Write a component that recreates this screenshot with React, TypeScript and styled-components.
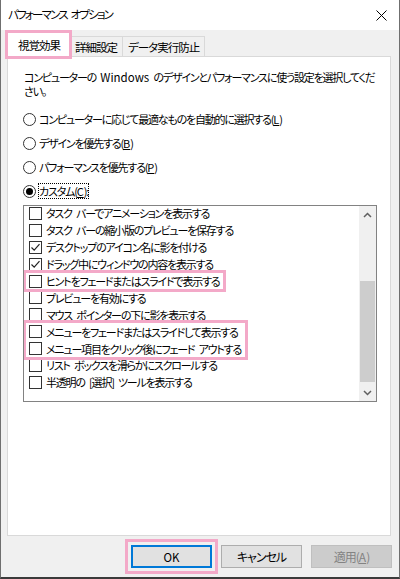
import React from 'react';
import styled, { createGlobalStyle } from 'styled-components';

const GlobalStyle = createGlobalStyle`
  html, body {
    margin: 0;
    padding: 0;
    background: #2b2b2b;
  }
  body {
    font-family: "Noto Sans CJK JP", "Noto Sans", sans-serif;
    font-size: 11px;
    color: #000;
    font-feature-settings: "palt";
    letter-spacing: -1.2px;
    word-spacing: 3px;
  }
`;

const PINK = '#f3a9c8';

const Window = styled.div`
  width: 400px;
  height: 579px;
  box-sizing: border-box;
  border-left: 1px solid #6f6f6f;
  border-right: 1px solid #6f6f6f;
  border-bottom: 2px solid #3a3a3a;
  background: #f0f0f0;
  display: flex;
  flex-direction: column;
  overflow: hidden;
`;

const TitleBar = styled.div`
  height: 30px;
  flex: none;
  background: #fff;
  display: flex;
  align-items: center;
  justify-content: space-between;
  padding: 0 12px 0 7px;
  box-sizing: border-box;
`;

const Title = styled.span`
  line-height: 1;
  font-size: 11.5px;
  letter-spacing: -1.8px;
`;

const Latin = styled.span`
  letter-spacing: 0;
  font-size: 11.5px;
`;

const Body = styled.div`
  flex: 1;
  display: flex;
  flex-direction: column;
  padding: 0 8px 0 6px;
  min-height: 0;
`;

const TabStrip = styled.div`
  height: 27px;
  flex: none;
  display: flex;
  align-items: flex-end;
  margin-bottom: -1px;
  position: relative;
  z-index: 2;
`;

const Tab = styled.div<{ active?: boolean; marked?: boolean }>`
  box-sizing: border-box;
  display: flex;
  align-items: center;
  justify-content: center;
  height: ${p => (p.active ? '25px' : '21px')};
  padding: ${p => (p.active ? '0 9px 0 10px' : '0 5px')};
  margin-left: ${p => (p.active ? '0' : '-1px')};
  background: ${p => (p.active ? '#fff' : '#f0f0f0')};
  border: 1px solid #d9d9d9;
  border-bottom: ${p => (p.active ? '1px solid #fff' : '1px solid #d9d9d9')};
  position: relative;
  z-index: ${p => (p.active ? 2 : 1)};
  white-space: nowrap;
  font-size: 11.5px;
  letter-spacing: -1px;
  ${p => (p.marked ? `outline: 3px solid ${PINK}; outline-offset: -1px;` : '')}
`;

const Panel = styled.div`
  flex: 1;
  background: #fff;
  border: 1px solid #d9d9d9;
  padding: 13px 13px 0 15px;
  display: flex;
  flex-direction: column;
  position: relative;
  z-index: 1;
`;

const Description = styled.p`
  margin: 0;
  line-height: 14px;
  padding-left: 1px;
`;

const Line = styled.span`
  display: block;
  white-space: nowrap;
`;

const RadioGroup = styled.div`
  margin-top: 13px;
  display: flex;
  flex-direction: column;
  gap: 8px;
`;

const RadioRow = styled.div`
  height: 16px;
  display: flex;
  align-items: center;
  gap: 3px;
`;

const RadioCircle = styled.span<{ checked?: boolean }>`
  width: 13px;
  height: 13px;
  box-sizing: border-box;
  border: 1px solid #333;
  border-radius: 50%;
  display: flex;
  align-items: center;
  justify-content: center;
  &::after {
    content: '';
    width: 7px;
    height: 7px;
    border-radius: 50%;
    background: #000;
    display: ${p => (p.checked ? 'block' : 'none')};
  }
`;

const RadioLabel = styled.span<{ focused?: boolean }>`
  line-height: 14px;
  white-space: nowrap;
  ${p => (p.focused ? 'outline: 1px dotted #000; outline-offset: 0;' : '')}
`;

const Key = styled.span`
  text-decoration: underline;
  letter-spacing: 0;
`;

const ListBox = styled.div`
  margin-top: 6px;
  height: 197px;
  box-sizing: border-box;
  border: 1px solid #828282;
  display: flex;
  overflow: hidden;
`;

const ListItems = styled.div`
  flex: 1;
  display: flex;
  flex-direction: column;
  align-items: flex-start;
  padding: 0 0 0 5px;
  margin-top: -1px;
  overflow: hidden;
`;

const Marked = styled.div`
  display: flex;
  flex-direction: column;
  flex: none;
  margin-left: -3px;
  padding: 0 4px 0 3px;
  outline: 3px solid ${PINK};
  outline-offset: 0;
  background: #fff;
  position: relative;
  z-index: 1;
`;

const CheckRow = styled.div`
  height: 16.9px;
  flex: none;
  display: flex;
  align-items: center;
  gap: 4px;
  white-space: nowrap;
  line-height: 14px;
`;

const Box = styled.span`
  width: 13px;
  height: 13px;
  box-sizing: border-box;
  border: 1px solid #333;
  background: #fff;
  flex: none;
  display: flex;
  align-items: center;
  justify-content: center;
`;

const ScrollBar = styled.div`
  width: 17px;
  flex: none;
  background: #f0f0f0;
  display: flex;
  flex-direction: column;
  align-items: center;
`;

const ArrowBtn = styled.div`
  width: 17px;
  height: 17px;
  flex: none;
  display: flex;
  align-items: center;
  justify-content: center;
`;

const Track = styled.div`
  flex: 1;
  width: 100%;
  display: flex;
  flex-direction: column;
  align-items: center;
  padding-top: 58px;
  box-sizing: border-box;
`;

const Thumb = styled.div`
  width: 15px;
  height: 101px;
  background: #cdcdcd;
`;

const Footer = styled.div`
  height: 41px;
  flex: none;
  display: flex;
  justify-content: flex-end;
  align-items: flex-start;
  padding-top: 9px;
  box-sizing: border-box;
  gap: 9px;
  margin-right: -1px;
`;

const Button = styled.button<{ variant?: 'default' | 'normal' | 'disabled'; marked?: boolean }>`
  width: 81px;
  height: 23px;
  box-sizing: border-box;
  font-family: inherit;
  font-size: 12px;
  font-feature-settings: "palt";
  letter-spacing: -1px;
  padding: 0;
  margin: 0;
  background: ${p => (p.variant === 'disabled' ? '#cccccc' : '#e1e1e1')};
  color: ${p => (p.variant === 'disabled' ? '#838383' : '#000')};
  border: ${p =>
    p.variant === 'default'
      ? '2px solid #0078d7'
      : p.variant === 'disabled'
        ? '1px solid #bfbfbf'
        : '1px solid #adadad'};
  ${p => (p.marked ? `outline: 3px solid ${PINK}; outline-offset: 3px;` : '')}
`;

const Check = () => (
  <svg width="11" height="11" viewBox="0 0 11 11">
    <path d="M1.5 5.5 L4.2 8.2 L9.5 2.2" fill="none" stroke="#222" strokeWidth="1.2" />
  </svg>
);

const Chevron = ({ down }: { down?: boolean }) => (
  <svg width="9" height="6" viewBox="0 0 9 6">
    <path
      d={down ? 'M1 1 L4.5 4.5 L8 1' : 'M1 5 L4.5 1.5 L8 5'}
      fill="none"
      stroke="#606060"
      strokeWidth="1.5"
    />
  </svg>
);

type Item = { label: string; checked?: boolean };

const CheckItem = ({ label, checked }: Item) => (
  <CheckRow>
    <Box>{checked && <Check />}</Box>
    <span>{label}</span>
  </CheckRow>
);

const before: Item[] = [
  { label: 'タスク バーでアニメーションを表示する' },
  { label: 'タスク バーの縮小版のプレビューを保存する' },
  { label: 'デスクトップのアイコン名に影を付ける', checked: true },
  { label: 'ドラッグ中にウィンドウの内容を表示する', checked: true },
];

const middle: Item[] = [
  { label: 'プレビューを有効にする' },
  { label: 'マウス ポインターの下に影を表示する' },
];

const menus: Item[] = [
  { label: 'メニューをフェードまたはスライドして表示する' },
  { label: 'メニュー項目をクリック後にフェード アウトする' },
];

const after: Item[] = [
  { label: 'リスト ボックスを滑らかにスクロールする' },
  { label: '半透明の [選択] ツールを表示する' },
];

export default function App() {
  return (
    <>
      <GlobalStyle />
      <Window>
        <TitleBar>
          <Title>パフォーマンス オプション</Title>
          <svg width="11" height="11" viewBox="0 0 11 11">
            <path d="M0.5 0.5 L10.5 10.5 M10.5 0.5 L0.5 10.5" stroke="#000" strokeWidth="1" />
          </svg>
        </TitleBar>
        <Body>
          <TabStrip>
            <Tab active marked>視覚効果</Tab>
            <Tab>詳細設定</Tab>
            <Tab>データ実行防止</Tab>
          </TabStrip>
          <Panel>
            <Description>
              <Line>
                コンピューターの <Latin>Windows</Latin> のデザインとパフォーマンスに使う設定を選択してくだ
              </Line>
              <Line>さい。</Line>
            </Description>
            <RadioGroup>
              <RadioRow>
                <RadioCircle />
                <RadioLabel>
                  コンピューターに応じて最適なものを自動的に選択する(<Key>L</Key>)
                </RadioLabel>
              </RadioRow>
              <RadioRow>
                <RadioCircle />
                <RadioLabel>
                  デザインを優先する(<Key>B</Key>)
                </RadioLabel>
              </RadioRow>
              <RadioRow>
                <RadioCircle />
                <RadioLabel>
                  パフォーマンスを優先する(<Key>P</Key>)
                </RadioLabel>
              </RadioRow>
              <RadioRow>
                <RadioCircle checked />
                <RadioLabel focused>
                  カスタム(<Key>C</Key>):
                </RadioLabel>
              </RadioRow>
            </RadioGroup>
            <ListBox>
              <ListItems>
                {before.map(i => (
                  <CheckItem key={i.label} {...i} />
                ))}
                <Marked>
                  <CheckItem label="ヒントをフェードまたはスライドで表示する" />
                </Marked>
                {middle.map(i => (
                  <CheckItem key={i.label} {...i} />
                ))}
                <Marked>
                  {menus.map(i => (
                    <CheckItem key={i.label} {...i} />
                  ))}
                </Marked>
                {after.map(i => (
                  <CheckItem key={i.label} {...i} />
                ))}
              </ListItems>
              <ScrollBar>
                <ArrowBtn>
                  <Chevron />
                </ArrowBtn>
                <Track>
                  <Thumb />
                </Track>
                <ArrowBtn>
                  <Chevron down />
                </ArrowBtn>
              </ScrollBar>
            </ListBox>
          </Panel>
          <Footer>
            <Button variant="default" marked>
              <Latin>OK</Latin>
            </Button>
            <Button variant="normal">キャンセル</Button>
            <Button variant="disabled">
              適用(<Key>A</Key>)
            </Button>
          </Footer>
        </Body>
      </Window>
    </>
  );
}
